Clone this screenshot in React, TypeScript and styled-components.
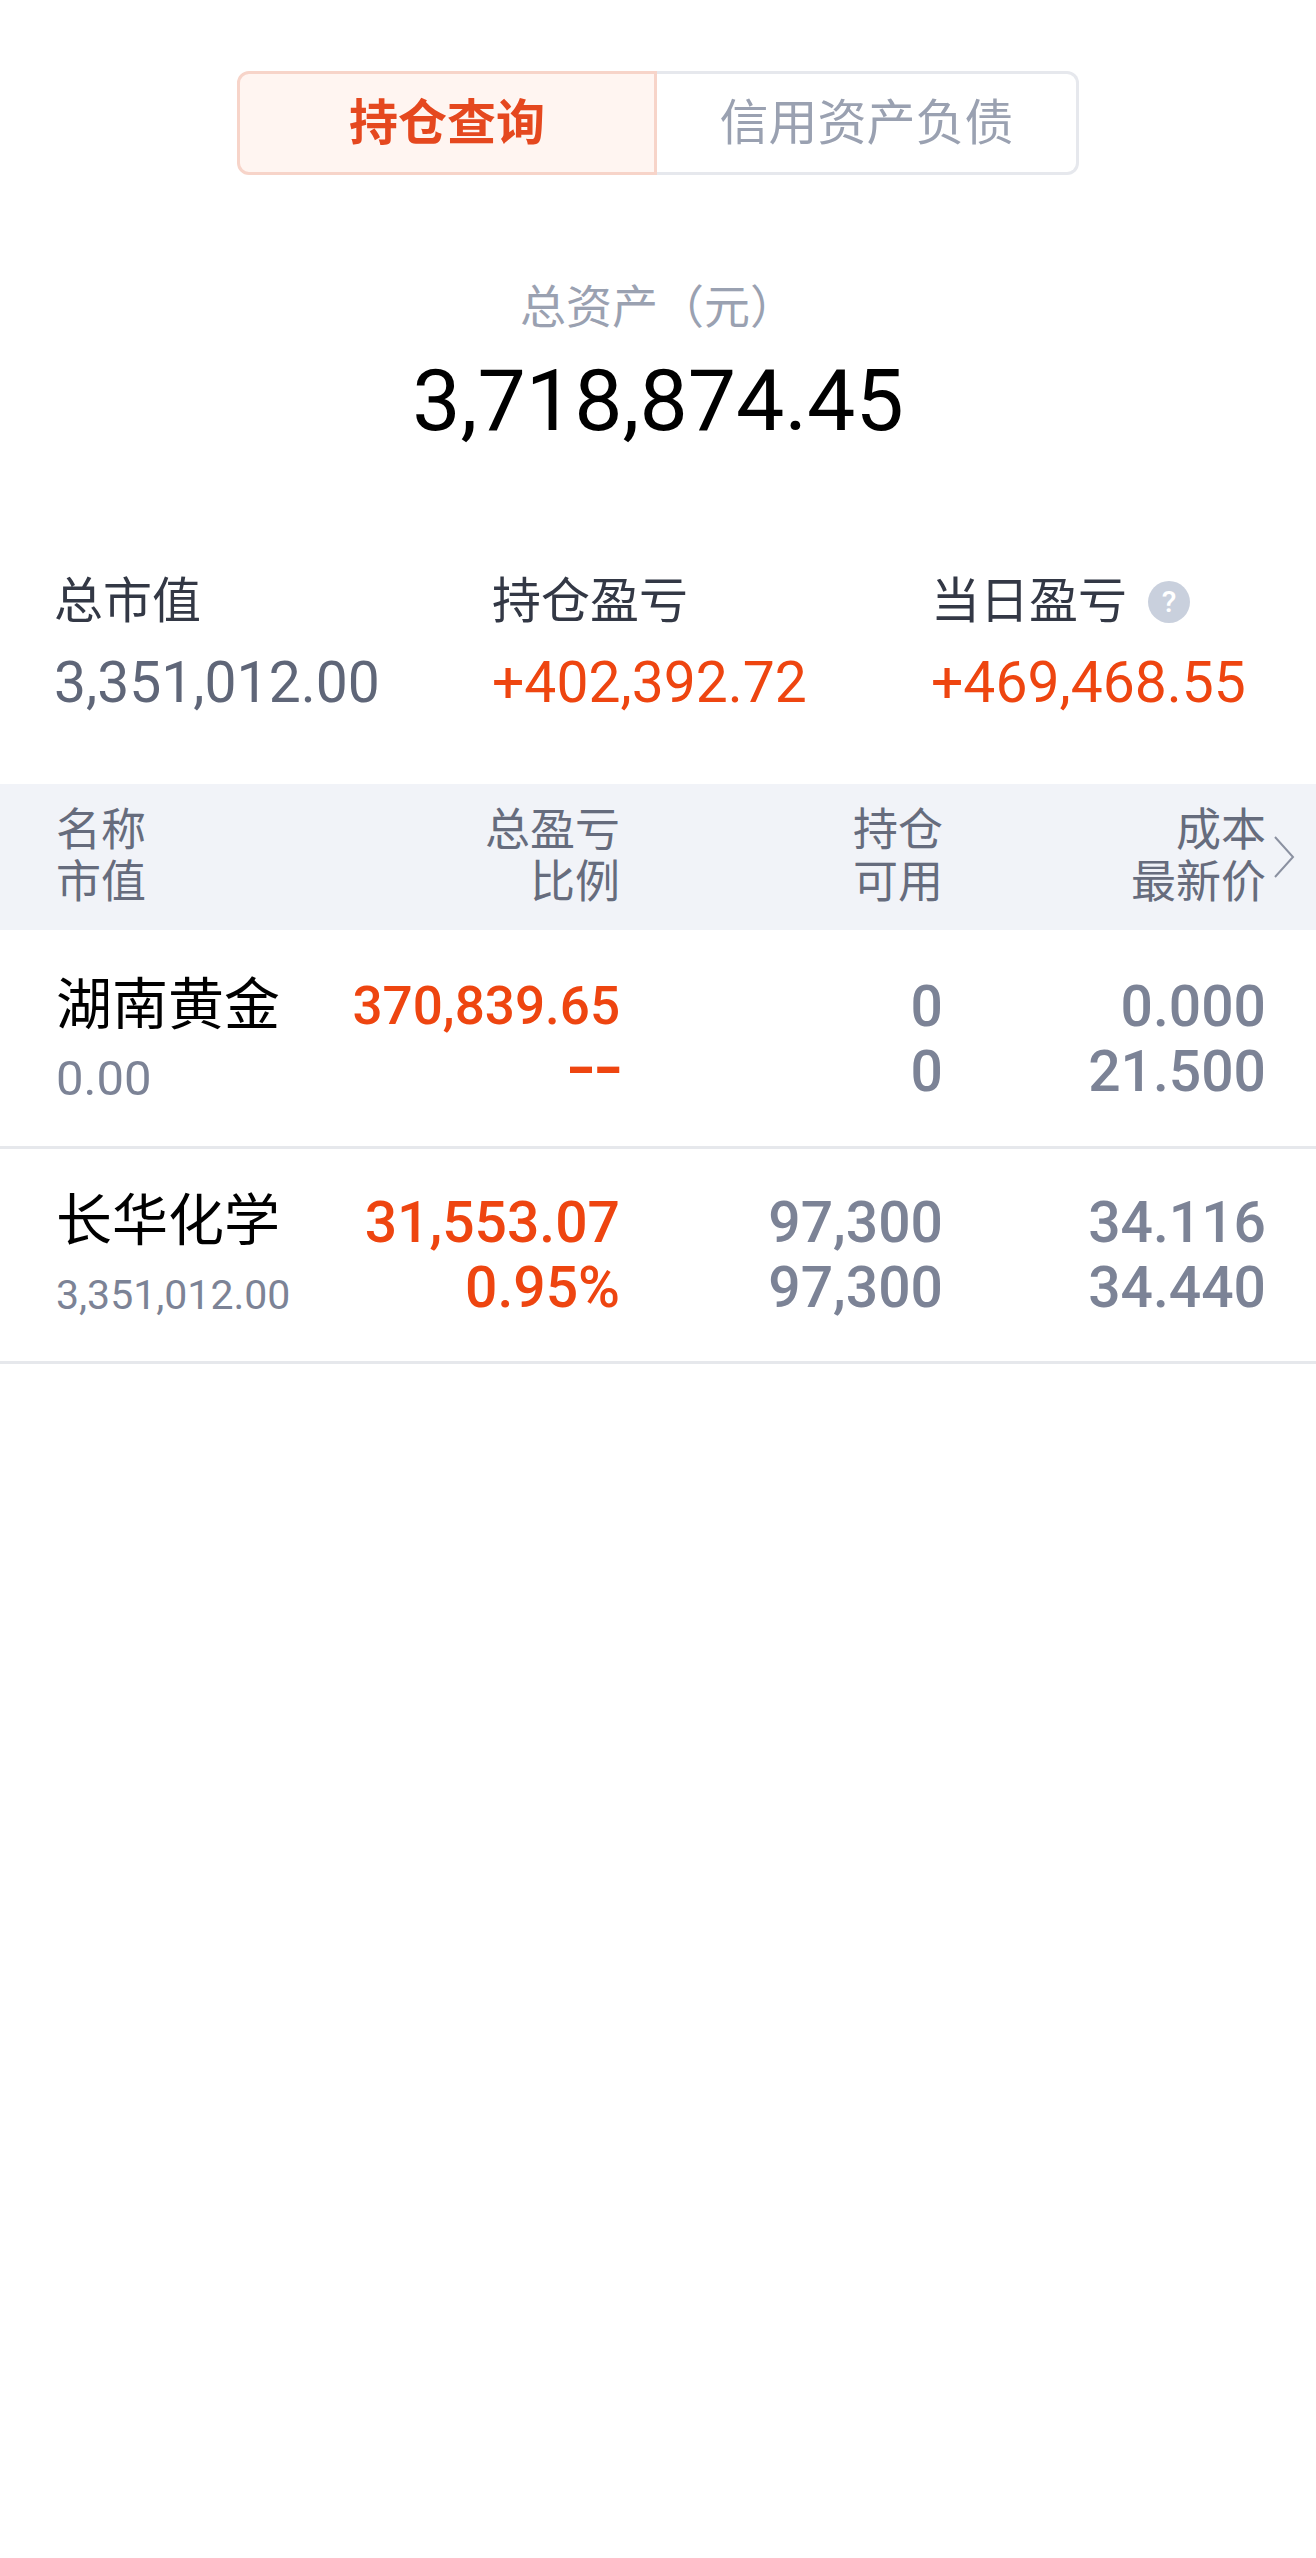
import styled, { createGlobalStyle } from 'styled-components'

type Holding = {
	name: string
	marketValue: string
	smallValue?: boolean
	profit: string
	smallProfit?: boolean
	ratio: string
	position: string
	available: string
	cost: string
	price: string
	tall?: boolean
}

const holdings: Holding[] = [
	{
		name: '湖南黄金',
		marketValue: '0.00',
		profit: '370,839.65',
		smallProfit: true,
		ratio: '--',
		position: '0',
		available: '0',
		cost: '0.000',
		price: '21.500',
		tall: true,
	},
	{
		name: '长华化学',
		marketValue: '3,351,012.00',
		smallValue: true,
		profit: '31,553.07',
		ratio: '0.95%',
		position: '97,300',
		available: '97,300',
		cost: '34.116',
		price: '34.440',
	},
]

const GlobalStyle = createGlobalStyle`
	html, body {
		margin: 0;
		padding: 0;
		background: #fff;
	}

	body {
		font-family: Roboto, 'Noto Sans CJK SC', sans-serif;
	}
`

const Page = styled.div`
	width: 1316px;
	height: 2558px;
	padding-top: 71px;
	box-sizing: border-box;
	background: #fff;
	overflow: hidden;
`

const Tabs = styled.div`
	display: flex;
	width: 842px;
	height: 104px;
	margin: 0 auto;
`

const Tab = styled.div<{ $active?: boolean }>`
	flex: ${p => (p.$active ? '0 0 420px' : '1')};
	display: flex;
	align-items: center;
	justify-content: center;
	box-sizing: border-box;
	padding-bottom: 10px;
	font-size: 49px;
	font-weight: ${p => (p.$active ? 700 : 400)};
	color: ${p => (p.$active ? '#e5481f' : '#9aa1b1')};
	background: ${p => (p.$active ? '#fff5f1' : '#fff')};
	border: 3px solid ${p => (p.$active ? '#f7d4c9' : '#e6e8ed')};
	border-left-width: ${p => (p.$active ? '3px' : '0')};
	border-radius: ${p => (p.$active ? '12px 0 0 12px' : '0 12px 12px 0')};
`

const Summary = styled.div`
	display: flex;
	flex-direction: column;
	align-items: center;
	margin-top: 102px;
`

const SummaryLabel = styled.div`
	font-size: 46px;
	line-height: 60px;
	color: #9aa1b1;
`

const SummaryValue = styled.div`
	margin-top: 9px;
	font-size: 86px;
	line-height: 110px;
	color: #000;
`

const Stats = styled.div`
	display: grid;
	grid-template-columns: 438px 439px 1fr;
	margin-top: 114px;
	padding-left: 54px;
`

const StatLabel = styled.div`
	display: flex;
	align-items: center;
	gap: 21px;
	font-size: 49px;
	line-height: 64px;
	color: #333845;
`

const HelpIcon = styled.span`
	display: flex;
	align-items: center;
	justify-content: center;
	width: 42px;
	height: 42px;
	border-radius: 50%;
	background: #c9d0dd;
	color: #fff;
	font-size: 30px;
	font-weight: 500;
	line-height: 1;
`

const StatValue = styled.div<{ $up?: boolean }>`
	margin-top: 16px;
	font-size: 57px;
	line-height: 66px;
	color: ${p => (p.$up ? '#ee4510' : '#5f6678')};
`

const TableHead = styled.div`
	display: grid;
	grid-template-columns: 244px 320px 323px 323px 29px;
	align-items: center;
	height: 146px;
	margin-top: 68px;
	padding-left: 56px;
	background: #f1f3f8;
`

const HeadCell = styled.div<{ $left?: boolean }>`
	display: flex;
	flex-direction: column;
	align-items: ${p => (p.$left ? 'flex-start' : 'flex-end')};
	font-size: 45px;
	line-height: 52px;
	color: #666c7d;
`

const Chevron = styled.svg`
	justify-self: end;
	width: 22px;
	height: 42px;
`

const Row = styled.div<{ $tall?: boolean }>`
	display: grid;
	grid-template-columns: 244px 320px 323px 323px;
	align-items: start;
	height: ${p => (p.$tall ? '219px' : '215px')};
	box-sizing: border-box;
	padding: ${p => (p.$tall ? '40px' : '37px')} 0 0 56px;
	border-bottom: 3px solid #e6e8ec;
`

const NameCell = styled.div`
	display: flex;
	flex-direction: column;
	white-space: nowrap;
`

const Name = styled.div`
	font-size: 56px;
	line-height: 70px;
	color: #000;
`

const MarketValue = styled.div<{ $small?: boolean }>`
	height: 56px;
	margin-top: 11px;
	font-size: ${p => (p.$small ? '41px' : '49px')};
	line-height: 56px;
	color: #7c8396;
`

const ValueCell = styled.div<{ $up?: boolean }>`
	display: flex;
	flex-direction: column;
	align-items: flex-end;
	margin-top: 4px;
	font-size: 57px;
	font-weight: 500;
	line-height: 65px;
	color: ${p => (p.$up ? '#ee4510' : '#7c8396')};
`

const Profit = styled.span<{ $small?: boolean }>`
	font-size: ${p => (p.$small ? '53px' : '57px')};
`

const Ratio = styled.span<{ $empty?: boolean }>`
	line-height: ${p => (p.$empty ? '63px' : '65px')};
	font-weight: ${p => (p.$empty ? 700 : 500)};
	letter-spacing: ${p => (p.$empty ? '-3px' : '0')};
	transform: ${p => (p.$empty ? 'translateY(-3px) scaleX(1.4)' : 'none')};
	transform-origin: right center;
`

export default function App() {
	return (
		<Page>
			<GlobalStyle />
			<Tabs>
				<Tab $active>持仓查询</Tab>
				<Tab>信用资产负债</Tab>
			</Tabs>

			<Summary>
				<SummaryLabel>总资产（元）</SummaryLabel>
				<SummaryValue>3,718,874.45</SummaryValue>
			</Summary>

			<Stats>
				<div>
					<StatLabel>总市值</StatLabel>
					<StatValue>3,351,012.00</StatValue>
				</div>
				<div>
					<StatLabel>持仓盈亏</StatLabel>
					<StatValue $up>+402,392.72</StatValue>
				</div>
				<div>
					<StatLabel>
						当日盈亏
						<HelpIcon>?</HelpIcon>
					</StatLabel>
					<StatValue $up>+469,468.55</StatValue>
				</div>
			</Stats>

			<TableHead>
				<HeadCell $left>
					<span>名称</span>
					<span>市值</span>
				</HeadCell>
				<HeadCell>
					<span>总盈亏</span>
					<span>比例</span>
				</HeadCell>
				<HeadCell>
					<span>持仓</span>
					<span>可用</span>
				</HeadCell>
				<HeadCell>
					<span>成本</span>
					<span>最新价</span>
				</HeadCell>
				<Chevron viewBox='0 0 22 42' fill='none'>
					<path d='M2 1 L20 21 L2 41' stroke='#8b91a1' strokeWidth='2' />
				</Chevron>
			</TableHead>

			{holdings.map(item => (
				<Row key={item.name} $tall={item.tall}>
					<NameCell>
						<Name>{item.name}</Name>
						<MarketValue $small={item.smallValue}>{item.marketValue}</MarketValue>
					</NameCell>
					<ValueCell $up>
						<Profit $small={item.smallProfit}>{item.profit}</Profit>
						<Ratio $empty={item.ratio === '--'}>{item.ratio}</Ratio>
					</ValueCell>
					<ValueCell>
						<span>{item.position}</span>
						<span>{item.available}</span>
					</ValueCell>
					<ValueCell>
						<span>{item.cost}</span>
						<span>{item.price}</span>
					</ValueCell>
				</Row>
			))}
		</Page>
	)
}
